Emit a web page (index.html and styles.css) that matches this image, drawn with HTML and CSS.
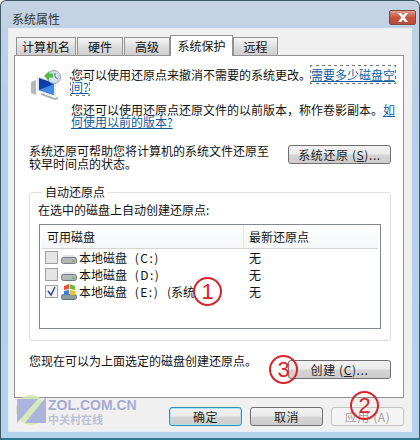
FILE: index.html
```html
<!DOCTYPE html>
<html lang="zh-CN">
<head>
    <meta charset="UTF-8">
    <title>系统属性</title>
    <link rel="stylesheet" href="styles.css">
</head>
<body>
    <div class="window">
        <div class="titlebar">
            <span class="title">系统属性</span>
            <span class="close">
                <svg width="12" height="9" viewBox="0 0 12 9"><path d="M1 0h3l2 2.500L8 0h3L7.700 4.500 11 9H8L6 6.500 4 9H1l3.300-4.500z" fill="#fff"/></svg>
            </span>
        </div>
        <div class="dialog">
            <div class="tabs">
                <span class="tab tab-name">计算机名</span>
                <span class="tab tab-hw">硬件</span>
                <span class="tab tab-adv">高级</span>
                <span class="tab tab-active">系统保护</span>
                <span class="tab tab-remote">远程</span>
            </div>
            <div class="panel">
                <div class="intro">
                    <svg class="intro-icon" width="32" height="32" viewBox="0 0 32 32">
                        <path d="M2 13l5-2v15l-5-2z" fill="#b4b9bc"/>
                        <path d="M8 7l19 6v15L8 22z" fill="#e4e8ea"/>
                        <path d="M10 9l15 5v12L10 21z" fill="#0c3cae"/>
                        <path d="M10 21l15-6v11z" fill="#3f8ae4"/>
                        <path d="M12 24l14 5 3-1v2l-3 1-14-5z" fill="#a9afb3"/>
                        <circle cx="25" cy="8" r="6.500" fill="#d6e2ea" stroke="#8ea5b5"/>
                        <path d="M26 4v4l3 2" fill="none" stroke="#5c7080"/>
                        <path d="M15 7l5-5v2.500h4v4h-4V12z" fill="#56b848"/>
                    </svg>
                    <div class="intro-text">
                        <p class="intro-para">您可以使用还原点来撤消不需要的系统更改。<a class="link link-dotted">需要多少磁盘空间?</a></p>
                        <p class="intro-para">您还可以使用还原点还原文件的以前版本，称作卷影副本。<a class="link">如何使用以前的版本?</a></p>
                    </div>
                </div>
                <div class="restore-row">
                    <p class="restore-text">系统还原可帮助您将计算机的系统文件还原至较早时间点的状态。</p>
                    <button class="btn btn-wide">系统还原 (<u>S</u>)...</button>
                </div>
                <fieldset class="group">
                    <legend class="group-title">自动还原点</legend>
                    <p class="group-text">在选中的磁盘上自动创建还原点:</p>
                    <div class="list">
                        <div class="list-head">
                            <span class="col-drive">可用磁盘</span>
                            <span class="col-point">最新还原点</span>
                        </div>
                        <div class="list-row">
                            <span class="check"></span>
                            <svg class="drive" width="16" height="12" viewBox="0 0 16 12"><path d="M3 3h10l3 4v4H0V7z" fill="#e2e5e6"/><rect x="0.500" y="5.500" width="15" height="6" rx="2" fill="#b4b8ba" stroke="#777c80"/><rect x="11" y="8" width="3" height="2" fill="#7fae78"/></svg>
                            <span class="col-name">本地磁盘 <span class="letter">(C:)</span></span>
                            <span class="col-val">无</span>
                        </div>
                        <div class="list-row">
                            <span class="check"></span>
                            <svg class="drive" width="16" height="12" viewBox="0 0 16 12"><path d="M3 3h10l3 4v4H0V7z" fill="#e2e5e6"/><rect x="0.500" y="5.500" width="15" height="6" rx="2" fill="#b4b8ba" stroke="#777c80"/><rect x="11" y="8" width="3" height="2" fill="#7fae78"/></svg>
                            <span class="col-name">本地磁盘 <span class="letter">(D:)</span></span>
                            <span class="col-val">无</span>
                        </div>
                        <div class="list-row">
                            <span class="check check-on">
                                <svg width="11" height="11" viewBox="0 0 11 11"><path d="M2 5l3 4 4-8" fill="none" stroke="#3a4f9c" stroke-width="1.600"/></svg>
                            </span>
                            <svg class="drive" width="16" height="16" viewBox="0 0 16 16"><rect x="0.500" y="10.500" width="15" height="5" rx="2" fill="#8f9ba2" stroke="#5f6a70"/><path d="M3 2l5-2v5L3 6z" fill="#e2533a"/><path d="M9 0l5 2v4L9 5z" fill="#6cb944"/><path d="M3 7l5-1v5H3z" fill="#3d7fd8"/><path d="M9 6l5 1v4H9z" fill="#f2c02e"/></svg>
                            <span class="col-name">本地磁盘 <span class="letter">(E:)</span> (系统</span>
                            <span class="col-val">无</span>
                        </div>
                    </div>
                </fieldset>
                <div class="create-row">
                    <p class="create-text">您现在可以为上面选定的磁盘创建还原点。</p>
                    <button class="btn btn-wide">创建 (<u>C</u>)...</button>
                </div>
            </div>
            <div class="actions">
                <button class="btn btn-action btn-default">确定</button>
                <button class="btn btn-action">取消</button>
                <button class="btn btn-action btn-disabled">应用 (A)</button>
            </div>
        </div>

        <!-- annotations and watermark sit over the dialog -->
        <span class="mark mark-1">1</span>
        <span class="mark mark-2">2</span>
        <span class="mark mark-3">3</span>
        <div class="watermark">
            <svg width="31" height="32" viewBox="0 0 31 32">
                <circle cx="15" cy="16" r="15" fill="#d4e8b0"/>
                <path d="M1 5h21L1 29z" fill="#a3a9d8"/>
                <path d="M30 3v26H9z" fill="#a3a9d8"/>
            </svg>
            <div class="watermark-text">
                <span class="watermark-en">ZOL.COM.CN</span>
                <span class="watermark-cn">中关村在线</span>
            </div>
        </div>
    </div>
</body>
</html>
```

FILE: styles.css
```css
* {
    box-sizing: border-box;
}
body {
    margin: 0;
    font-family: "Noto Sans CJK SC", "Liberation Sans", sans-serif;
    font-size: 12px;
    color: #111;
}
p {
    margin: 0;
}
.window {
    position: relative;
    width: 420px;
    height: 440px;
    padding: 0 7px 7px;
    background: linear-gradient(to bottom, #c3d3e3, #b3cfe9 30%, #b5d2ec);
    border: 1px solid #3f5a66;
    border-bottom: 2px solid #2f7a8a;
    border-radius: 6px 6px 0 0;
    overflow: hidden;
}
.titlebar {
    display: flex;
    justify-content: space-between;
    height: 27px;
    padding-left: 4px;
}
.title {
    line-height: 36px;
    color: #333;
}
.close {
    display: flex;
    align-items: center;
    justify-content: center;
    width: 27px;
    height: 15px;
    margin-top: 9px;
    margin-right: -4px;
    background: linear-gradient(to bottom, #dfa08e, #c8503c 50%, #b5503e);
    border: 1px solid #7c4a40;
    border-radius: 2px;
}
.dialog {
    height: 404px;
    padding: 6px 7px 0 5px;
    background: #f0f0f0;
    border: 1px solid #e8eef3;
}
.tabs {
    display: flex;
    align-items: flex-end;
    height: 20px;
    padding-left: 2px;
}
.tab {
    height: 18px;
    margin-right: 1px;
    line-height: 17px;
    text-align: center;
    background: linear-gradient(to bottom, #f6f6f6, #dcdcdc 55%, #cfcfcf);
    border: 1px solid #929292;
    border-bottom: 0;
}
.tab-name {
    width: 60px;
}
.tab-hw {
    width: 46px;
}
.tab-adv {
    width: 46px;
    margin-right: 0;
}
.tab-active {
    position: relative;
    width: 63px;
    height: 21px;
    margin-bottom: -1px;
    margin-right: 0;
    line-height: 20px;
    background: #fff;
}
.tab-remote {
    width: 45px;
    margin-right: 0;
}
.panel {
    width: 390px;
    height: 343px;
    padding: 13px 12px 0 14px;
    background: #fff;
    border: 1px solid #929292;
}
.intro {
    display: flex;
    line-height: 12px;
}
.intro-icon {
    flex: none;
    margin-right: 10px;
}
.intro-text {
    flex: none;
    width: 325px;
}
.intro-para {
    margin-bottom: 11px;
    line-height: 12px;
}
.link {
    color: #0f5b9e;
    text-decoration: underline;
}
.link-dotted {
    outline: 1px dotted #777;
}
.restore-row {
    display: flex;
    justify-content: space-between;
    align-items: flex-start;
    margin-top: 6px;
}
.restore-text {
    width: 250px;
    margin-top: -1px;
    line-height: 13px;
}
.btn {
    height: 19px;
    padding: 0;
    font-family: inherit;
    font-size: 12px;
    line-height: 16px;
    letter-spacing: 0.6px;
    color: #222;
    background: linear-gradient(to bottom, #f2f2f2, #ebebeb 45%, #d4d4d4 55%, #cdcdcd);
    border: 1px solid #707070;
    border-radius: 3px;
}
.btn-wide {
    flex: none;
    width: 103px;
}
.group {
    width: 361px;
    height: 156px;
    margin: 15px 0 0 0;
    padding: 4px 9px 0 8px;
    border: 1px solid #dcdfe1;
    border-radius: 3px;
}
.group-title {
    margin-left: 4px;
    padding: 0 3px;
    line-height: 14px;
}
.group-text {
    line-height: 14px;
}
.list {
    width: 342px;
    height: 105px;
    margin: 7px 0 0 1px;
    padding: 0 2px;
    border: 1px solid #828790;
}
.list-head {
    display: flex;
    height: 24px;
    line-height: 24px;
    background: linear-gradient(to bottom, #fff, #f4f6f8);
    border-bottom: 1px solid #d5d5d5;
}
.col-drive {
    width: 202px;
    padding-left: 5px;
    border-right: 1px solid #e3e5e7;
}
.col-point {
    padding-left: 5px;
}
.list-row {
    display: flex;
    align-items: center;
    height: 17px;
    padding-left: 3px;
}
.check {
    display: flex;
    flex: none;
    align-items: center;
    justify-content: center;
    width: 13px;
    height: 13px;
    background: #e4e4e4;
    border: 1px solid #a0a0a0;
}
.check-on {
    background: #f4f4f4;
}
.drive {
    flex: none;
    margin: 0 2px 0 3px;
}
.col-name {
    width: 170px;
    white-space: nowrap;
    word-spacing: 5px;
}
.letter {
    letter-spacing: 1.5px;
}
.create-row {
    display: flex;
    justify-content: space-between;
    align-items: flex-start;
    margin-top: 19px;
}
.create-text {
    line-height: 14px;
    margin-top: -6px;
}
.actions {
    display: flex;
    justify-content: flex-end;
    gap: 8px;
    margin-top: 9px;
}
.btn-action {
    width: 73px;
}
.btn-default {
    border-color: #3a8fb0;
    box-shadow: inset 0 0 0 1px #a8e4f4;
}
.btn-disabled {
    color: #a0a0a0;
    background: #f4f4f4;
    border-color: #c4c4c4;
}
.mark {
    position: absolute;
    width: 29px;
    height: 29px;
    font-family: "Liberation Sans", sans-serif;
    font-size: 22px;
    line-height: 25px;
    text-align: center;
    color: #d8242c;
    border: 2px solid #d8242c;
    border-radius: 50%;
}
.mark-1 {
    left: 192px;
    top: 276px;
}
.mark-2 {
    left: 349px;
    top: 390px;
}
.mark-3 {
    left: 268px;
    top: 354px;
}
.watermark {
    position: absolute;
    left: 15px;
    top: 393px;
    display: flex;
    gap: 1px;
    opacity: 0.85;
}
.watermark-text {
    display: flex;
    flex-direction: column;
    padding-top: 4px;
}
.watermark-en {
    font-family: "Liberation Sans", sans-serif;
    font-size: 14px;
    font-weight: bold;
    line-height: 15px;
    color: #9aa0cc;
}
.watermark-cn {
    font-size: 11px;
    font-weight: bold;
    line-height: 12px;
    color: #b4b8d0;
}
```
